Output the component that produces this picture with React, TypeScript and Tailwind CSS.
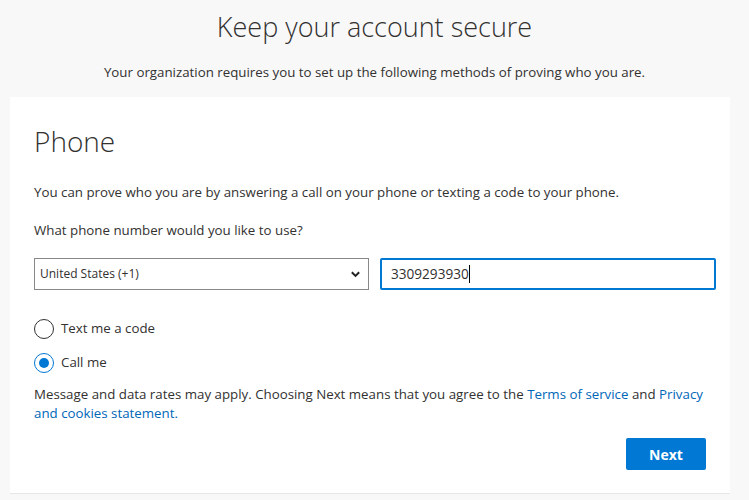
import React from "react";

export default function App() {
  return (
    <div
      className="w-[749px] h-[500px] overflow-hidden bg-[#f8f8f8] text-[#323130]"
      style={{ fontFamily: '"Open Sans", "Noto Sans", sans-serif' }}
    >
      <h1 className="pt-[9px] text-center text-[27px] leading-[36px] font-light">
        Keep your account secure
      </h1>
      <p className="mt-[17px] text-center text-[13.3px] leading-[20px]">
        Your organization requires you to set up the following methods of proving who you are.
      </p>
      <div className="ml-[10px] mt-[15px] w-[720px] h-[397px] bg-white pl-[24px] pr-[14px] pt-[24px] border-b border-[#e6e6e6]">
        <h2 className="text-[28px] leading-[40px] font-light">Phone</h2>
        <p className="mt-[21px] text-[13.3px] leading-[20px]">
          You can prove who you are by answering a call on your phone or texting a code to your phone.
        </p>
        <p className="mt-[18px] text-[13.3px] leading-[20px]">What phone number would you like to use?</p>
        <div className="mt-[18px] flex gap-[11px]">
          <div className="w-[335px] shrink-0 h-[32px] border border-[#8a8886] flex items-center justify-between pl-[5px] pr-[7px]">
            <span className="text-[12px]">United States (+1)</span>
            <svg width="11" height="11" viewBox="0 0 12 12">
              <path d="M2 3.5 L6 7.5 L10 3.5" fill="none" stroke="#222" strokeWidth="2.2" />
            </svg>
          </div>
          <div className="w-[336px] shrink-0 h-[32px] border-2 border-[#0078d4] rounded-[2px] flex items-center pl-[9px]">
            <span className="text-[13.6px]">3309293930</span>
            <span className="w-px h-[18px] bg-black" />
          </div>
        </div>
        <div className="mt-[29px] flex items-center gap-[7px]">
          <span className="w-[20px] h-[20px] rounded-full border border-[#323130] bg-white" />
          <span className="text-[13.3px]">Text me a code</span>
        </div>
        <div className="mt-[14px] flex items-center gap-[7px]">
          <span className="w-[20px] h-[20px] rounded-full border border-[#0078d4] flex items-center justify-center">
            <span className="w-[10px] h-[10px] rounded-full bg-[#0078d4]" />
          </span>
          <span className="text-[13.3px]">Call me</span>
        </div>
        <p className="mt-[12px] pr-[10px] text-[13.3px] leading-[19px]">
          Message and data rates may apply. Choosing Next means that you agree to the{" "}
          <a className="text-[#0067b8]">Terms of service</a> and{" "}
          <a className="text-[#0067b8]">Privacy and cookies statement.</a>
        </p>
        <div className="mt-[15px] flex justify-end pr-[10px]">
          <button className="w-[80px] h-[32px] bg-[#0078d4] text-white text-[14px] font-bold rounded-[2px]">
            Next
          </button>
        </div>
      </div>
    </div>
  );
}
